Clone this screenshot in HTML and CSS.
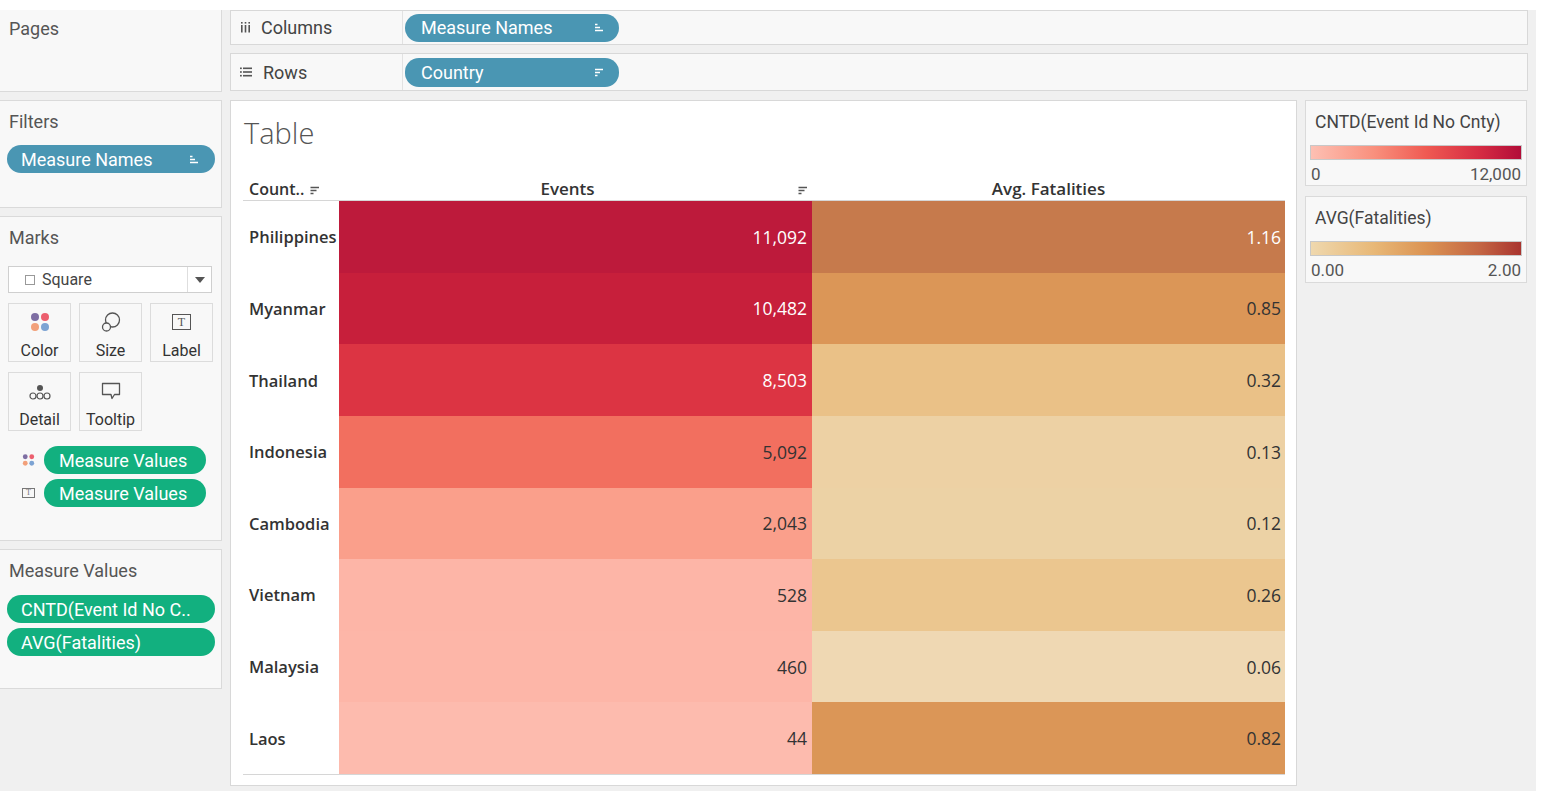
FILE: index.html
```html
<!DOCTYPE html>
<html>
<head>
<meta charset="utf-8">
<title>Table</title>
<link rel="stylesheet" href="styles.css">
</head>
<body>
<div class="app">
  <aside class="side">
    <section class="card card-pages">
      <div class="card-title">Pages</div>
    </section>
    <section class="card card-filters">
      <div class="card-title">Filters</div>
      <div class="pill pill-blue pill-full">
        <span>Measure Names</span>
        <svg class="sort" viewBox="0 0 10 9" width="10" height="9"><path d="M1 1.5h2.5M1 4.5h5M1 7.5h8" stroke="#fff" stroke-width="1.4"/></svg>
      </div>
    </section>
    <section class="card card-marks">
      <div class="card-title">Marks</div>
      <div class="mark-select">
        <span class="sq"></span>
        <span class="sel-text">Square</span>
        <span class="caret"><svg viewBox="0 0 10 6" width="10" height="6"><path d="M0 0h10L5 6z" fill="#555"/></svg></span>
      </div>
      <div class="mark-grid">
        <div class="mark-btn">
          <svg class="mk-ico" viewBox="0 0 22 22" width="22" height="22">
            <circle cx="6" cy="6" r="4" fill="#7e6ea3"/>
            <circle cx="16" cy="6" r="4" fill="#ec5f6e"/>
            <circle cx="6" cy="16" r="4" fill="#f2a07a"/>
            <circle cx="16" cy="16" r="4" fill="#7ca3d3"/>
          </svg>
          <span>Color</span>
        </div>
        <div class="mark-btn">
          <svg class="mk-ico" viewBox="0 0 22 22" width="22" height="22">
            <circle cx="12.5" cy="9" r="7" fill="none" stroke="#555" stroke-width="1.3"/>
            <circle cx="6.5" cy="16" r="4" fill="#f8f8f8" stroke="#555" stroke-width="1.3"/>
          </svg>
          <span>Size</span>
        </div>
        <div class="mark-btn">
          <span class="t-box t-big">T</span>
          <span>Label</span>
        </div>
        <div class="mark-btn">
          <svg class="mk-ico" viewBox="0 0 22 22" width="22" height="22">
            <circle cx="11" cy="8" r="3" fill="#555"/>
            <circle cx="4" cy="16" r="3" fill="none" stroke="#555" stroke-width="1.2"/>
            <circle cx="11" cy="16" r="3" fill="none" stroke="#555" stroke-width="1.2"/>
            <circle cx="18" cy="16" r="3" fill="none" stroke="#555" stroke-width="1.2"/>
          </svg>
          <span>Detail</span>
        </div>
        <div class="mark-btn">
          <svg class="mk-ico" viewBox="0 0 22 22" width="22" height="22">
            <path d="M2.5 3.5h17v11h-5l-2.5 4l-1-4h-8.5z" fill="none" stroke="#555" stroke-width="1.3" stroke-linejoin="round"/>
          </svg>
          <span>Tooltip</span>
        </div>
      </div>
      <div class="mark-pills">
        <div class="mp-row">
          <svg class="mp-ico" viewBox="0 0 14 14" width="14" height="14">
            <circle cx="3.5" cy="3.5" r="2.6" fill="#7e6ea3"/>
            <circle cx="10.5" cy="3.5" r="2.6" fill="#ec5f6e"/>
            <circle cx="3.5" cy="10.5" r="2.6" fill="#f2a07a"/>
            <circle cx="10.5" cy="10.5" r="2.6" fill="#7ca3d3"/>
          </svg>
          <div class="pill pill-green pill-mark"><span>Measure Values</span></div>
        </div>
        <div class="mp-row">
          <span class="t-box t-small">T</span>
          <div class="pill pill-green pill-mark"><span>Measure Values</span></div>
        </div>
      </div>
    </section>
    <section class="card card-mv">
      <div class="card-title">Measure Values</div>
      <div class="mv-pills">
        <div class="pill pill-green pill-full"><span>CNTD(Event Id No C..</span></div>
        <div class="pill pill-green pill-full"><span>AVG(Fatalities)</span></div>
      </div>
    </section>
  </aside>

  <main class="main">
    <div class="shelf shelf-cols">
      <div class="shelf-label">
        <svg class="shelf-ico" viewBox="0 0 11 11" width="11" height="11">
          <rect x="1" y="0" width="1.6" height="1.6" fill="#555"/><rect x="1" y="3" width="1.6" height="7.5" fill="#555"/>
          <rect x="4.7" y="0" width="1.6" height="1.6" fill="#555"/><rect x="4.7" y="3" width="1.6" height="7.5" fill="#555"/>
          <rect x="8.4" y="0" width="1.6" height="1.6" fill="#555"/><rect x="8.4" y="3" width="1.6" height="7.5" fill="#555"/>
        </svg>
        <span>Columns</span>
      </div>
      <div class="shelf-body">
        <div class="pill pill-blue pill-shelf">
          <span>Measure Names</span>
          <svg class="sort" viewBox="0 0 10 9" width="10" height="9"><path d="M1 1.5h2.5M1 4.5h5M1 7.5h8" stroke="#fff" stroke-width="1.4"/></svg>
        </div>
      </div>
    </div>
    <div class="shelf shelf-rows">
      <div class="shelf-label">
        <svg class="shelf-ico" viewBox="0 0 12 10" width="12" height="10">
          <rect x="0" y="0.5" width="1.8" height="1.6" fill="#555"/><rect x="3" y="0.5" width="9" height="1.6" fill="#555"/>
          <rect x="0" y="4.2" width="1.8" height="1.6" fill="#555"/><rect x="3" y="4.2" width="9" height="1.6" fill="#555"/>
          <rect x="0" y="7.9" width="1.8" height="1.6" fill="#555"/><rect x="3" y="7.9" width="9" height="1.6" fill="#555"/>
        </svg>
        <span>Rows</span>
      </div>
      <div class="shelf-body">
        <div class="pill pill-blue pill-shelf pill-rows">
          <span>Country</span>
          <svg class="sort" viewBox="0 0 10 9" width="10" height="9"><path d="M1 1.5h8M1 4.5h5M1 7.5h2.5" stroke="#fff" stroke-width="1.4"/></svg>
        </div>
      </div>
    </div>

    <div class="workarea">
      <div class="view">
        <h1 class="view-title">Table</h1>
        <div class="thead">
          <div class="th th-label">
            <span>Count..</span>
            <svg class="sort hsort" viewBox="0 0 10 9" width="10" height="9"><path d="M0.5 1.5h8.5M0.5 4.5h6M0.5 7.5h3" stroke="#555" stroke-width="1.3"/></svg>
          </div>
          <div class="th th-col th-events">
            <span></span>
            <span class="th-text">Events</span>
            <svg class="sort hsort col-sort" viewBox="0 0 10 9" width="10" height="9"><path d="M0.5 1.5h8.5M0.5 4.5h6M0.5 7.5h3" stroke="#555" stroke-width="1.3"/></svg>
          </div>
          <div class="th th-col">
            <span></span>
            <span class="th-text">Avg. Fatalities</span>
            <span></span>
          </div>
        </div>
        <div class="tbody">
          <div class="rl">Philippines</div>
          <div class="cell on-dark" style="background:#bd1a3b">11,092</div>
          <div class="cell on-dark av" style="background:#c67a4c">1.16</div>

          <div class="rl">Myanmar</div>
          <div class="cell on-dark" style="background:#c71f3b">10,482</div>
          <div class="cell av" style="background:#db9657">0.85</div>

          <div class="rl">Thailand</div>
          <div class="cell on-dark" style="background:#dc3443">8,503</div>
          <div class="cell av" style="background:#eac187">0.32</div>

          <div class="rl">Indonesia</div>
          <div class="cell" style="background:#f26f5f">5,092</div>
          <div class="cell av" style="background:#edd1a4">0.13</div>

          <div class="rl">Cambodia</div>
          <div class="cell" style="background:#fa9f8b">2,043</div>
          <div class="cell av" style="background:#ecd2a5">0.12</div>

          <div class="rl">Vietnam</div>
          <div class="cell" style="background:#fdb5a7">528</div>
          <div class="cell av" style="background:#ebc68f">0.26</div>

          <div class="rl">Malaysia</div>
          <div class="cell" style="background:#fdb6a8">460</div>
          <div class="cell av" style="background:#efd8b3">0.06</div>

          <div class="rl">Laos</div>
          <div class="cell" style="background:#fdbbae">44</div>
          <div class="cell av" style="background:#db9657">0.82</div>
        </div>
      </div>

      <div class="legends">
        <div class="legend">
          <div class="legend-title">CNTD(Event Id No Cnty)</div>
          <div class="legend-bar bar-red"></div>
          <div class="legend-labels"><span>0</span><span>12,000</span></div>
        </div>
        <div class="legend legend-2">
          <div class="legend-title">AVG(Fatalities)</div>
          <div class="legend-bar bar-orange"></div>
          <div class="legend-labels"><span>0.00</span><span>2.00</span></div>
        </div>
      </div>
    </div>
  </main>
</div>
</body>
</html>
```

FILE: styles.css
```css
html, body {
  margin: 0;
  padding: 0;
}
body {
  background: #ffffff;
  font-family: Roboto, "Liberation Sans", Arial, sans-serif;
  color: #444;
}
.app {
  display: flex;
  gap: 8px;
  width: 1536px;
  height: 781px;
  margin-top: 10px;
  background: #f0f0f0;
  overflow: hidden;
}

/* ---------- left side ---------- */
.side {
  width: 222px;
  flex: none;
  display: flex;
  flex-direction: column;
  gap: 8px;
}
.card {
  box-sizing: border-box;
  background: #f8f8f8;
  border: 1px solid #dadada;
  border-left: none;
  padding: 10px 6px 0 7px;
}
.card-title {
  font-size: 18px;
  line-height: 22px;
  color: #555;
  padding-left: 2px;
}
.card-pages {
  height: 82px;
  border-top: none;
  padding-top: 8px;
}
.card-filters { height: 108px; }
.card-marks { height: 325px; }
.card-mv { height: 140px; }

.card-filters .pill { margin-top: 12px; }

.pill {
  box-sizing: border-box;
  display: flex;
  align-items: center;
  justify-content: space-between;
  color: #fff;
  font-size: 18px;
  border-radius: 14px;
  white-space: nowrap;
}
.pill-blue { background: #4a96b3; }
.pill-green { background: #12b07f; }
.pill-full {
  width: 208px;
  height: 28px;
  padding: 0 16px 0 14px;
}
.sort { flex: none; display: block; }

/* marks */
.mark-select {
  box-sizing: border-box;
  margin: 17px 0 0 1px;
  width: 204px;
  height: 27px;
  background: #fff;
  border: 1px solid #cfcfcf;
  display: flex;
  align-items: center;
}
.sq {
  width: 8px;
  height: 8px;
  border: 1px solid #999;
  margin-left: 16px;
  margin-right: 7px;
}
.sel-text {
  flex: 1;
  font-size: 16px;
  color: #444;
}
.caret {
  width: 23px;
  height: 100%;
  border-left: 1px solid #dedede;
  display: flex;
  align-items: center;
  justify-content: center;
}
.mark-grid {
  margin: 10px 0 0 1px;
  display: grid;
  grid-template-columns: repeat(3, 63px);
  grid-auto-rows: 59px;
  gap: 10px 8px;
}
.mark-btn {
  box-sizing: border-box;
  border: 1px solid #dcdcdc;
  background: #f8f8f8;
  display: flex;
  flex-direction: column;
  align-items: center;
  padding-top: 7px;
  font-size: 16px;
  line-height: 20px;
  color: #333;
}
.mk-ico { height: 22px; margin-bottom: 8px; }
.t-box {
  box-sizing: border-box;
  display: flex;
  align-items: center;
  justify-content: center;
  border: 1px solid #555;
  color: #555;
  font-family: "Liberation Serif", "DejaVu Serif", serif;
}
.t-big {
  width: 19px;
  height: 16px;
  font-size: 12px;
  line-height: 14px;
  margin: 3px 0 11px;
}
.t-small {
  width: 12px;
  height: 10px;
  font-size: 8px;
  line-height: 8px;
  border-color: #777;
  color: #777;
}
.mark-pills {
  margin-top: 15px;
  display: flex;
  flex-direction: column;
  gap: 5px;
}
.mp-row {
  display: flex;
  align-items: center;
  padding-left: 15px;
}
.mp-ico, .mp-row .t-small { width: 13px; flex: none; margin-right: 9px; }
.pill-mark {
  width: 162px;
  height: 28px;
  padding-left: 15px;
}
.card-mv .card-title { margin-bottom: 13px; }
.mv-pills {
  display: flex;
  flex-direction: column;
  gap: 5px;
}

/* ---------- main ---------- */
.main {
  width: 1298px;
  flex: none;
  display: flex;
  flex-direction: column;
}
.shelf {
  box-sizing: border-box;
  display: flex;
  background: #f8f8f8;
  border: 1px solid #d8d8d8;
}
.shelf-cols { height: 35px; }
.shelf-rows { height: 38px; margin-top: 8px; }
.shelf-label {
  box-sizing: border-box;
  width: 172px;
  border-right: 1px solid #e2e2e2;
  display: flex;
  align-items: center;
  padding-left: 9px;
  font-size: 18px;
  color: #444;
}
.shelf-ico { margin-right: 10px; }
.shelf-rows .shelf-ico { margin-right: 11px; }
.shelf-body {
  display: flex;
  align-items: center;
  padding-left: 2px;
}
.pill-shelf {
  width: 214px;
  height: 28px;
  padding: 0 15px 0 16px;
}
.pill-rows { height: 29px; }

.workarea {
  margin-top: 9px;
  display: flex;
  gap: 8px;
  height: 686px;
}
.view {
  box-sizing: border-box;
  width: 1067px;
  height: 686px;
  flex: none;
  background: #fff;
  border: 1px solid #d8d8d8;
  padding: 12px 11px 0 12px;
}
.view-title {
  margin: 0;
  padding-left: 1px;
  font-family: "Open Sans", "Liberation Sans", sans-serif;
  font-weight: 300;
  font-size: 29px;
  line-height: 40px;
  color: #555;
}
.thead, .tbody {
  display: grid;
  grid-template-columns: 96px 473px 473px;
}
.thead {
  box-sizing: border-box;
  height: 48px;
  border-bottom: 1px solid #d6d6d6;
}
.th {
  display: flex;
  align-items: flex-end;
  font-family: "Open Sans", "Liberation Sans", sans-serif;
  font-weight: 600;
  font-size: 16px;
  line-height: 22px;
  color: #333;
  white-space: nowrap;
}
.th-text { font-size: 17px; }
.th-label { padding-left: 6px; }
.hsort { margin: 0 0 5px 6px; }
.th-col {
  display: grid;
  grid-template-columns: 1fr auto 1fr;
  align-items: end;
}
.th-events .th-text { margin-right: 16px; }
.col-sort { justify-self: end; margin-right: 4px; }
.tbody {
  grid-auto-rows: 71.625px;
  border-bottom: 1px solid #d6d6d6;
}
.rl {
  display: flex;
  align-items: center;
  padding-left: 6px;
  font-family: "Open Sans", "Liberation Sans", sans-serif;
  font-weight: 600;
  font-size: 16.5px;
  color: #333;
  white-space: nowrap;
}
.cell {
  display: flex;
  align-items: center;
  justify-content: flex-end;
  padding-right: 5px;
  font-family: "Open Sans", "Liberation Sans", sans-serif;
  font-size: 17.5px;
  color: #333;
}
.cell.av { padding-right: 4px; }
.cell.on-dark { color: #fff; }

/* legends */
.legends {
  width: 222px;
  flex: none;
  display: flex;
  flex-direction: column;
  gap: 10px;
}
.legend {
  box-sizing: border-box;
  height: 86px;
  background: #f8f8f8;
  border: 1px solid #dadada;
  padding: 10px 4px 0 4px;
}
.legend-2 { height: 87px; }
.legend-title {
  padding-left: 5px;
  font-size: 17.5px;
  line-height: 22px;
  color: #444;
  white-space: nowrap;
}
.legend-bar {
  box-sizing: border-box;
  margin-top: 12px;
  height: 15px;
  border: 1px solid #c8c8c8;
}
.bar-red { background: linear-gradient(to right, #fdc0b3 0%, #f9907d 30%, #ef5a52 55%, #d62c43 80%, #b20d38 100%); }
.bar-orange { background: linear-gradient(to right, #efd8ae 0%, #e8b877 30%, #db9353 55%, #c46644 80%, #a9342f 100%); }
.legend-labels {
  display: flex;
  justify-content: space-between;
  padding: 4px 1px 0 1px;
  font-size: 17px;
  line-height: 20px;
  color: #555;
}
```
